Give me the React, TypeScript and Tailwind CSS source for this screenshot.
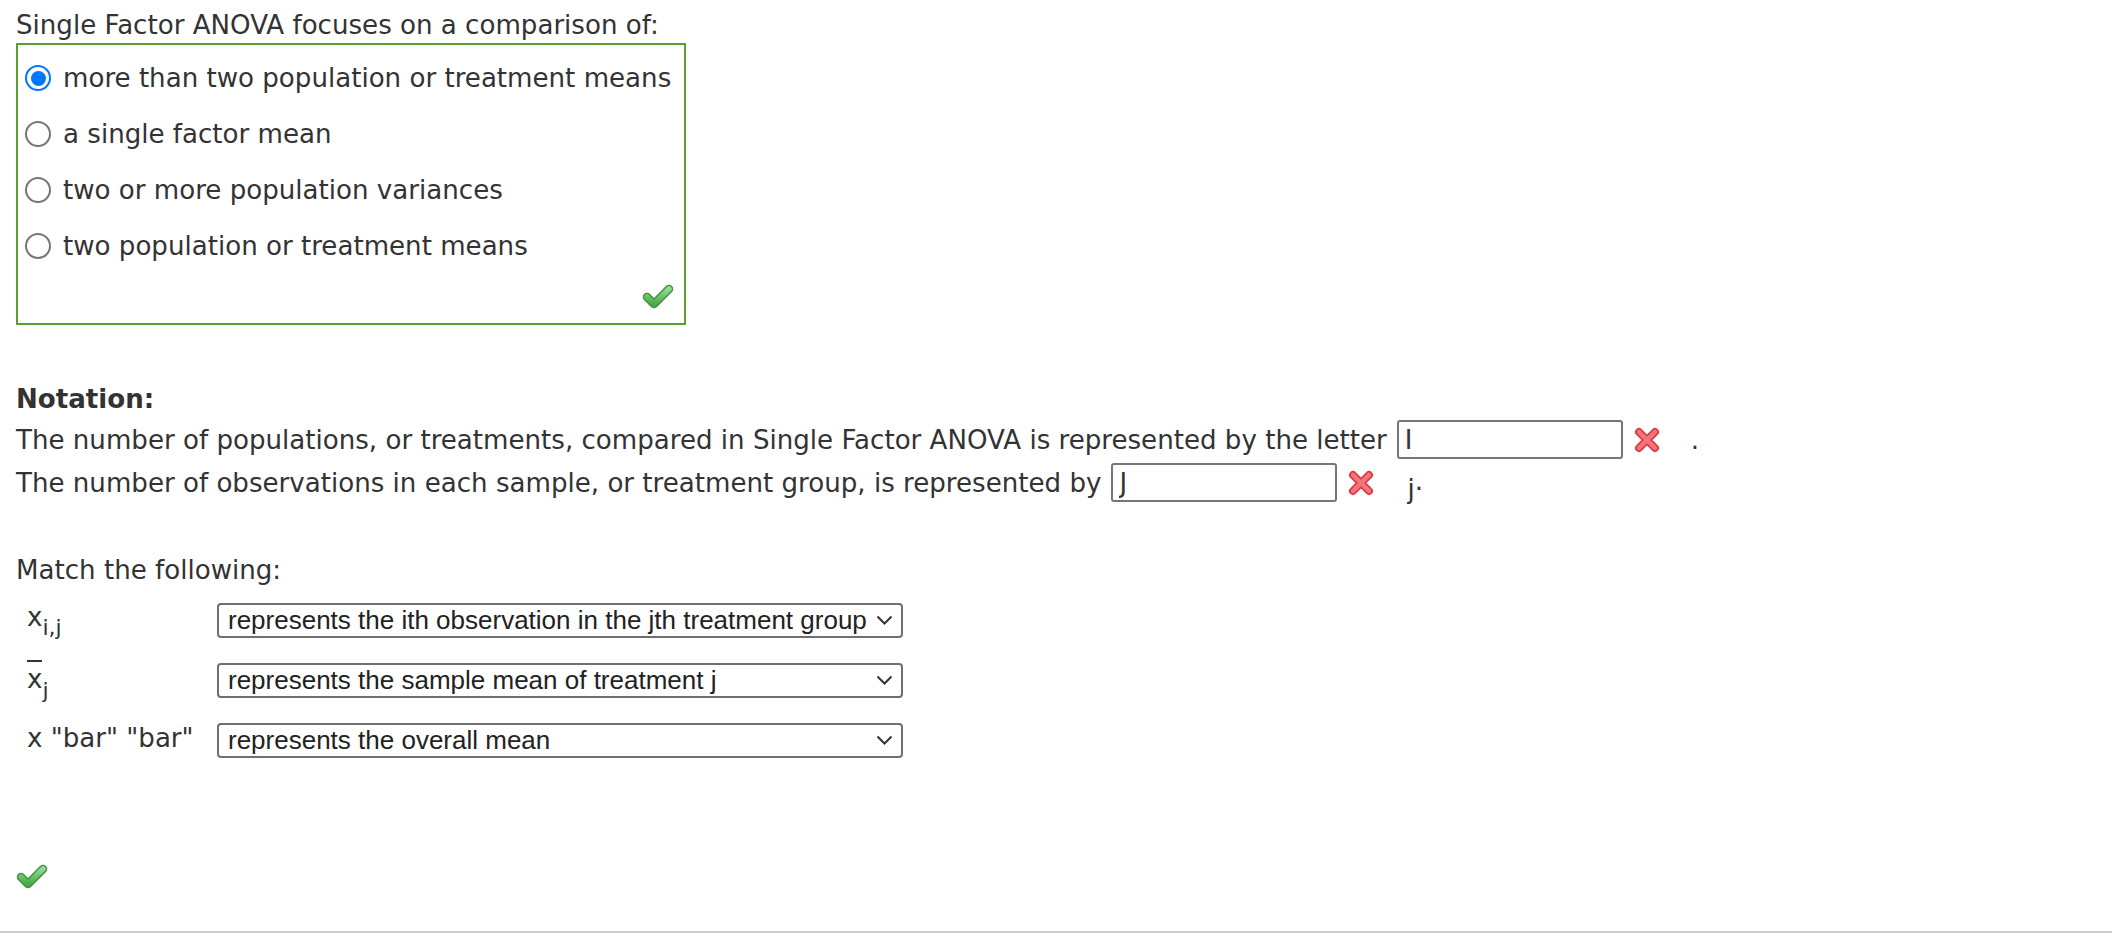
import React from "react";

function Check({ w = 32, h = 26 }: { w?: number; h?: number }) {
  return (
    <svg width={w} height={h} viewBox="0 0 32 26">
      <defs>
        <linearGradient id="gc" x1="0" y1="0" x2="0" y2="1">
          <stop offset="0" stopColor="#8fdc8f" />
          <stop offset="1" stopColor="#4aa84a" />
        </linearGradient>
      </defs>
      <path d="M5 14 L12 21 L27 6" fill="none" stroke="#3f943f" strokeWidth="8.5" strokeLinecap="round" strokeLinejoin="round" />
      <path d="M5 14 L12 21 L27 6" fill="none" stroke="url(#gc)" strokeWidth="5.5" strokeLinecap="round" strokeLinejoin="round" />
    </svg>
  );
}

function Cross() {
  return (
    <svg width="28" height="28" viewBox="0 0 28 28">
      <path d="M6 6 L22 22 M22 6 L6 22" fill="none" stroke="#dc3d45" strokeWidth="8" strokeLinecap="round" />
      <path d="M6 6 L22 22 M22 6 L6 22" fill="none" stroke="#f2737a" strokeWidth="4.5" strokeLinecap="round" />
    </svg>
  );
}

function Radio({ checked }: { checked: boolean }) {
  if (checked) {
    return (
      <span className="flex h-[26px] w-[26px] shrink-0 items-center justify-center rounded-full border-[2.5px] border-[#0075ff] bg-white">
        <span className="h-[15px] w-[15px] rounded-full bg-[#0075ff]" />
      </span>
    );
  }
  return <span className="h-[26px] w-[26px] shrink-0 rounded-full border-2 border-[#767676] bg-white" />;
}

function Chevron() {
  return (
    <svg width="17" height="10" viewBox="0 0 17 10" className="pointer-events-none absolute right-[10px] top-1/2 -translate-y-1/2">
      <path d="M1.5 1.5 L8.5 8.5 L15.5 1.5" fill="none" stroke="#333" strokeWidth="2" />
    </svg>
  );
}

function Sel({ value }: { value: string }) {
  return (
    <div className="relative">
      <select
        defaultValue={value}
        className="h-[35px] w-[686px] appearance-none rounded-[4px] border-2 border-[#6f6f6f] bg-white pl-[9px] font-['Liberation_Sans',Arial,sans-serif] text-[26px] leading-[31px] text-[#222]"
      >
        <option>{value}</option>
      </select>
      <Chevron />
    </div>
  );
}

const options = [
  "more than two population or treatment means",
  "a single factor mean",
  "two or more population variances",
  "two population or treatment means",
];

export default function App() {
  return (
    <div className="flex h-[933px] w-full flex-col bg-white font-['DejaVu_Sans',sans-serif] text-[26.1px] leading-[30px] text-[#333333]">
      <div className="pl-4 pt-[10px]">
        <div>Single Factor ANOVA focuses on a comparison of:</div>
        <div className="mt-[3px] flex h-[282px] w-[670px] flex-col border-2 border-[#5a9f2f] pt-[5px]">
          {options.map((o, i) => (
            <div key={o} className="flex h-[56px] items-center pl-[7px]">
              <Radio checked={i === 0} />
              <span className="ml-[12px] whitespace-nowrap">{o}</span>
            </div>
          ))}
          <div className="mt-[9px] flex justify-end pr-[10px]">
            <Check />
          </div>
        </div>

        <div className="mt-[59px] font-bold">Notation:</div>
        <div className="mt-[4px] flex h-[43px] items-center whitespace-nowrap">
          <span>The number of populations, or treatments, compared in Single Factor ANOVA is represented by the letter</span>
          <input
            readOnly
            value="I"
            className="ml-[10px] h-[39px] w-[226px] rounded-[3px] border-2 border-[#767676] bg-white px-[6px] text-[26px] text-[#333] outline-none"
          />
          <span className="ml-[10px] flex items-center">
            <Cross />
          </span>
          <span className="ml-[30px]">.</span>
        </div>
        <div className="flex h-[43px] items-center whitespace-nowrap">
          <span>The number of observations in each sample, or treatment group, is represented by</span>
          <input
            readOnly
            value="J"
            className="ml-[10px] h-[39px] w-[226px] rounded-[3px] border-2 border-[#767676] bg-white px-[6px] text-[26px] text-[#333] outline-none"
          />
          <span className="ml-[10px] flex items-center">
            <Cross />
          </span>
          <span className="ml-[32px]">
            <span className="relative top-[6px]">j</span>
            <span className="relative -top-[2px]">.</span>
          </span>
        </div>

        <div className="mt-[51px]">Match the following:</div>
        <div className="mt-[5px] flex flex-col">
          <div className="flex h-[60px] items-center">
            <div className="relative -top-[2px] w-[201px] pl-[11px]">
              x<span className="relative top-[9px] text-[22px]">i,j</span>
            </div>
            <Sel value="represents the ith observation in the jth treatment group" />
          </div>
          <div className="flex h-[60px] items-center">
            <div className="relative -top-[2px] w-[201px] pl-[11px]">
              <span className="inline-block border-t-2 border-[#333] leading-[34px]">x</span>
              <span className="relative top-[10px] text-[22px]">j</span>
            </div>
            <Sel value="represents the sample mean of treatment j" />
          </div>
          <div className="flex h-[60px] items-center">
            <div className="relative -top-[2px] w-[201px] pl-[11px] whitespace-nowrap">x "bar" "bar"</div>
            <Sel value="represents the overall mean" />
          </div>
        </div>

        <div className="mt-[93px]">
          <Check w={32} h={26} />
        </div>
      </div>
      <div className="mt-auto h-[2px] w-full bg-[#cccccc]" />
    </div>
  );
}
